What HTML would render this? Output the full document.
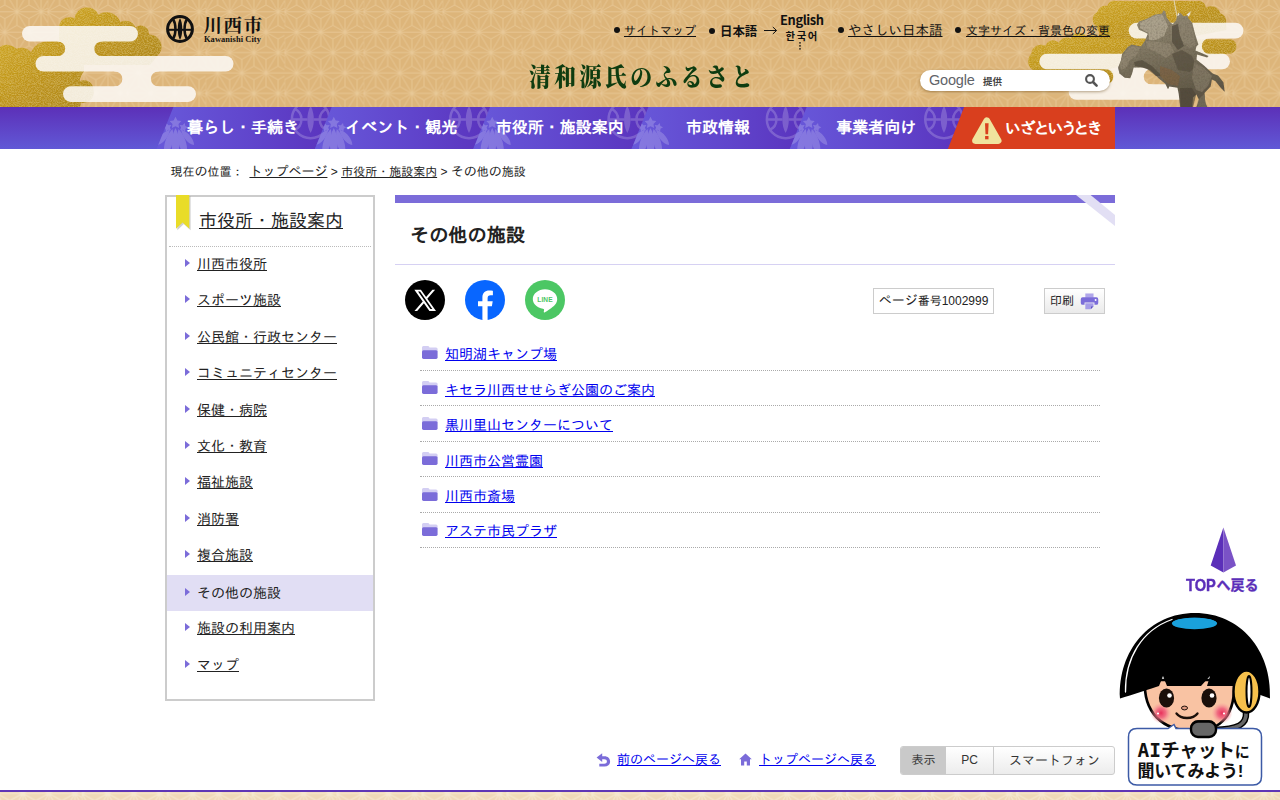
<!DOCTYPE html>
<html lang="ja">
<head>
<meta charset="utf-8">
<title>その他の施設｜川西市</title>
<style>
*{box-sizing:border-box;}
html,body{margin:0;padding:0;}
body{width:1280px;height:800px;overflow:hidden;background:#fff;position:relative;
  font-family:"Liberation Sans","IPAGothic","Noto Sans CJK JP",sans-serif;color:#222;font-size:14px;}
a{color:#222;text-decoration:underline;}
.abs{position:absolute;}
#header{position:absolute;left:0;top:0;width:1280px;height:107px;overflow:hidden;background:#ddb57a;}
#header svg.bg{position:absolute;left:0;top:0;}
#nav{position:absolute;left:0;top:107px;width:1280px;height:42px;background:linear-gradient(180deg,#5c30b8 0%,#6158d6 100%);overflow:hidden;}
.hl{position:absolute;top:23px;font-size:12px;line-height:16px;white-space:nowrap;color:#111;}
.hl a{color:#111;}
.dot{position:absolute;width:6px;height:6px;border-radius:50%;background:#111;}
.navtxt{position:absolute;top:0;height:42px;line-height:42px;color:#fff;font-weight:bold;font-size:16px;text-align:center;white-space:nowrap;
  font-family:"Liberation Sans","IPAGothic","Noto Sans CJK JP",sans-serif;}
.k{font-size:13px;}
#crumb{position:absolute;left:170.5px;top:162.500px;font-size:12px;line-height:18px;white-space:nowrap;color:#222;}
#side{position:absolute;left:165px;top:195px;width:210px;height:506px;border:2px solid #ccc;background:#fff;}
#side h2{margin:0;position:absolute;left:32px;top:13px;font-size:18px;font-weight:normal;line-height:22px;white-space:nowrap;}
#side .sep{position:absolute;left:2px;right:2px;top:49px;border-top:1px dotted #bbb;}
#side .it{position:absolute;left:0;width:206px;height:36px;line-height:36px;padding-left:30px;font-size:14px;white-space:nowrap;}
#side .it:before{content:"";position:absolute;left:18px;top:13px;border-left:5px solid #7b6cd9;border-top:4px solid transparent;border-bottom:4px solid transparent;}
#side .cur{background:#e1def4;}
#main{position:absolute;left:395px;top:195px;width:720px;}
#main .bar{position:absolute;left:0;top:0;width:720px;height:8px;background:#7b6cd9;}
#main h1{position:absolute;left:15px;top:29px;margin:0;font-size:19.2px;line-height:24px;font-weight:bold;white-space:nowrap;color:#222;}
#main .hline{position:absolute;left:0;top:69px;width:720px;border-top:1px solid #d6d1f3;}
.sns{position:absolute;top:85px;width:40px;height:40px;}
#pno{position:absolute;left:478px;top:93px;width:121px;height:26px;border:1px solid #ccc;font-size:12px;line-height:24px;text-align:center;white-space:nowrap;background:#fff;}
#prt{position:absolute;left:649px;top:93px;width:61px;height:26px;border:1px solid #ccc;background:linear-gradient(#fff,#eaeaea);font-size:12px;line-height:24px;padding-left:5px;white-space:nowrap;}
.li{position:absolute;left:25px;width:680px;height:35.48px;border-bottom:1px dotted #aaa;font-size:14px;line-height:20px;white-space:nowrap;}
.li a{position:absolute;left:25px;top:8.780px;color:#0000ee;}
.li svg{position:absolute;left:2px;top:10.300px;}
#foot a{color:#0000ee;}
</style>
</head>
<body>

<div id="header">
<svg class="bg" width="1280" height="107" viewBox="0 0 1280 107">
  <defs>
    <pattern id="asa" x="-31.5" y="0" width="79" height="40.8" patternUnits="userSpaceOnUse">
      <path d="M-24.2 11.75L0 11.75M-12.1 -8.65L0 11.75M-12.1 4.95L0 11.75M-12.1 18.55L0 11.75M-12.1 32.15L0 52.55M-12.1 32.15L12.1 32.15M0 -1.85L0 11.75M0 11.75L-12.1 32.15M0 11.75L12.1 32.15M0 11.75L24.2 11.75M0 25.35L-12.1 32.15M0 25.35L0 11.75M0 25.35L12.1 32.15M0 38.95L-12.1 32.15M0 38.95L0 52.55M0 38.95L12.1 32.15M12.1 -8.65L0 11.75M12.1 -8.65L24.2 11.75M12.1 4.95L0 11.75M12.1 4.95L12.1 -8.65M12.1 4.95L24.2 11.75M12.1 18.55L0 11.75M12.1 18.55L12.1 32.15M12.1 18.55L24.2 11.75M12.1 32.15L0 52.55M12.1 32.15L24.2 52.55M12.1 32.15L36.3 32.15M12.1 45.75L12.1 32.15M24.2 -1.85L24.2 11.75M24.2 11.75L12.1 32.15M24.2 11.75L36.3 32.15M24.2 11.75L48.4 11.75M24.2 25.35L12.1 32.15M24.2 25.35L24.2 11.75M24.2 25.35L36.3 32.15M24.2 38.95L12.1 32.15M24.2 38.95L24.2 52.55M24.2 38.95L36.3 32.15M36.3 -8.65L24.2 11.75M36.3 -8.65L48.4 11.75M36.3 4.95L24.2 11.75M36.3 4.95L36.3 -8.65M36.3 4.95L48.4 11.75M36.3 18.55L24.2 11.75M36.3 18.55L36.3 32.15M36.3 18.55L48.4 11.75M36.3 32.15L24.2 52.55M36.3 32.15L48.4 52.55M36.3 32.15L60.5 32.15M36.3 45.75L36.3 32.15M48.4 -1.85L48.4 11.75M48.4 11.75L36.3 32.15M48.4 11.75L60.5 32.15M48.4 11.75L72.6 11.75M48.4 25.35L36.3 32.15M48.4 25.35L48.4 11.75M48.4 25.35L60.5 32.15M48.4 38.95L36.3 32.15M48.4 38.95L48.4 52.55M48.4 38.95L60.5 32.15M60.5 -8.65L48.4 11.75M60.5 -8.65L72.6 11.75M60.5 4.95L48.4 11.75M60.5 4.95L60.5 -8.65M60.5 4.95L72.6 11.75M60.5 18.55L48.4 11.75M60.5 18.55L60.5 32.15M60.5 18.55L72.6 11.75M60.5 32.15L48.4 52.55M60.5 32.15L72.6 52.55M60.5 32.15L84.7 32.15M60.5 45.75L60.5 32.15M72.6 -1.85L72.6 11.75M72.6 11.75L60.5 32.15M72.6 11.75L84.7 32.15M72.6 11.75L96.8 11.75M72.6 25.35L60.5 32.15M72.6 25.35L72.6 11.75M72.6 25.35L84.7 32.15M72.6 38.95L60.5 32.15M72.6 38.95L72.6 52.55M72.6 38.95L84.7 32.15M84.7 -8.65L72.6 11.75M84.7 4.95L72.6 11.75M84.7 18.55L72.6 11.75M84.7 32.15L72.6 52.55" stroke="#e8c999" stroke-width="0.95" stroke-opacity="0.85" fill="none"/>
    </pattern>
    <linearGradient id="gold" x1="0" y1="0" x2="1" y2="1">
      <stop offset="0" stop-color="#cda526"/><stop offset="0.5" stop-color="#bd931a"/><stop offset="1" stop-color="#ad861a"/>
    </linearGradient>
    <linearGradient id="bronze" x1="0" y1="0" x2="0.3" y2="1"><stop offset="0" stop-color="#9a917b"/><stop offset="0.5" stop-color="#7d7460"/><stop offset="1" stop-color="#5f5746"/></linearGradient>
    <filter id="stat" x="-5%" y="-5%" width="110%" height="110%">
      <feGaussianBlur in="SourceGraphic" stdDeviation="0.45" result="b"/>
      <feTurbulence type="fractalNoise" baseFrequency="0.55" numOctaves="2" seed="11" result="n"/>
      <feColorMatrix in="n" type="matrix" values="0 0 0 0 0.1  0 0 0 0 0.08  0 0 0 0 0.05  0.8 0 0 0 -0.3" result="dk"/>
      <feComposite in="dk" in2="b" operator="in" result="dk2"/>
      <feMerge><feMergeNode in="b"/><feMergeNode in="dk2"/></feMerge>
    </filter>
    <filter id="foil" x="0" y="0" width="100%" height="100%">
      <feTurbulence type="fractalNoise" baseFrequency="0.7 1.1" numOctaves="2" seed="7" result="n"/>
      <feColorMatrix in="n" type="matrix" values="0 0 0 0 0.9  0 0 0 0 0.74  0 0 0 0 0.22  0.8 0 0 0 -0.3" result="spark"/>
      <feComposite in="spark" in2="SourceGraphic" operator="in" result="s2"/>
      <feMerge><feMergeNode in="SourceGraphic"/><feMergeNode in="s2"/></feMerge>
    </filter>
  </defs>
  <rect width="1280" height="107" fill="url(#asa)"/>

  <!-- left gold clouds -->
  <g id="cloudL" filter="url(#foil)">
    <path fill="url(#gold)" d="M59 26.500A10.400 10.400 0 0 1 74.500 18.500A12.700 12.700 0 0 1 98.500 14.500A14.900 14.900 0 0 1 120.400 22A10.900 10.900 0 0 1 135.500 27.500A8.100 8.100 0 0 1 148.800 34.400A12.300 12.300 0 0 1 157 56.200L150 65L70 65L59 56Z"/>
    <path fill="url(#gold)" d="M0 47A13 13 0 0 1 16.500 48.800A12.200 12.200 0 0 1 31 52A18 18 0 0 1 48 41.300L70 41L70 60L84 62L84 71.500Q80 76 79.800 81.200A9.500 9.500 0 0 1 93.500 90A10.500 10.500 0 0 1 81 102.500L80 107L0 107Z"/>
  </g>
  <g fill="#fcf9f5" opacity="0.88">
    <rect x="22" y="26" width="116" height="15.6" rx="7.8"/>
    <rect x="35.5" y="56" width="198" height="15.6" rx="7.8"/>
    <rect x="63" y="86.3" width="133" height="15.6" rx="7.8"/>
    <path d="M56 40.500L57.800 41.400A7.300 7.300 0 0 1 57.800 56.200L56 57L103.500 57L101.700 56.200A7.300 7.300 0 0 1 101.700 41.400L103.500 40.500Z"/>
    <path d="M113 70.500L114.800 71.400A7.400 7.400 0 0 1 114.800 86.500L113 87.300L160.200 87.300L158.400 86.500A7.400 7.400 0 0 1 158.400 71.400L160.200 70.500Z"/>
  </g>
  <!-- right gold clouds -->
  <g id="cloudR" filter="url(#foil)">
    <path fill="url(#gold)" d="M1099 40Q1100 33 1097 26.400A8 8 0 0 1 1097.200 12.200A8.500 8.500 0 0 1 1107.300 6A7 7 0 0 1 1115.500 1L1198.800 1A7 7 0 0 1 1205.900 8.100A9 9 0 0 1 1220.100 13.200A8 8 0 0 1 1226.200 21.300L1226.200 30L1150 45Z"/>
    <path fill="url(#gold)" d="M1100 38.600A9 9 0 0 0 1087 37.600A9 9 0 0 0 1070.800 38.600A9 9 0 0 0 1058.600 42.700A8 8 0 0 0 1045.400 45.700A10 10 0 0 0 1031.200 53.800A11 11 0 0 0 1034.200 71.100Q1036 80 1045 83.500L1107.300 83.500A7.500 7.500 0 0 0 1109.400 69L1150 60L1231 53.500A7.300 7.300 0 0 0 1231.300 39.500L1150 39Z"/>
  </g>
  <g fill="#fcf9f5" opacity="0.88">
    <rect x="1128.7" y="22.7" width="114.7" height="15.8" rx="7.9"/>
    <rect x="1039.3" y="53.8" width="190.7" height="15.4" rx="7.7"/>
    <rect x="1068.7" y="84.3" width="125" height="15.4" rx="7.7"/>
    <path d="M1103.500 68.200L1105.500 69A7.600 7.600 0 0 1 1105.500 84.500L1103.500 85.300L1153.500 85.300L1151.500 84.500A7.600 7.600 0 0 1 1151.500 69L1153.500 68.200Z"/>
    <path d="M1148 37.500L1150 38.300A7.700 7.700 0 0 1 1150 54L1148 54.800L1211.700 54.800L1209.700 54A7.700 7.700 0 0 1 1209.700 38.300L1211.700 37.500Z"/>
  </g>

  <!-- statue -->
  <g id="statue" filter="url(#stat)">
    <path d="M1178.500 24C1176.500 14 1175 6 1174 0" fill="none" stroke="#f2ede2" stroke-width="0.800"/>
    <path d="M1178 22L1194 36M1150 30L1176 42" fill="none" stroke="#4a4336" stroke-width="0.700"/>
    <path d="M1137 25L1139 21.6L1146.4 18.9L1154.5 14.8L1162 13.5L1163.3 10.6L1165.3 11.3L1166.7 17.5L1170 22.3L1172.8 24.3L1176.1 20.2L1177.5 14.8L1180.2 12.8L1183.6 16.2L1187.5 15.5L1188.3 18.2L1192.3 23L1195 33.7L1198.4 44.5L1196.4 46.6L1195.5 50.5L1208.5 56L1207.2 57.6L1197 54.6L1196.4 59.4L1204.5 66.1L1212.6 73.6L1218 75.6L1223.4 82.3L1224.7 91.8L1220.7 87.7L1215.3 81L1211.9 79.6L1210.6 86.4L1204.5 93.1L1205.2 102.6L1207.2 107L1196.4 107L1199.1 99.9L1196.4 94.5L1193 97.2L1192.3 107L1180.2 107L1178.8 94.5L1177.5 87.7L1169.4 86.4L1168 89.3L1165.3 83.7L1158.6 78.3L1150.5 70.2L1142.4 67.5L1133.6 67.5L1132.3 72.9L1130.2 78.3L1124.8 77.8L1119.4 73.6L1118.1 67.5L1120.8 60.7L1122.1 54L1127.5 47.2L1131.6 44.5L1141 46.6L1145.1 40.5L1147.8 33.7L1143.7 31.7L1139 29.7Z" fill="url(#bronze)"/>
    <path d="M1140 22.500L1147 19.500L1155 15.500L1162 14.500L1165 20L1168 26L1164 36L1156 40L1149 40L1148.500 33L1144 30.500L1140 28Z" fill="#b3a994" opacity="0.8"/>
    <path d="M1146 41L1158 42L1170 44L1174 52L1166 58L1156 52L1147 48Z" fill="#958a75" opacity="0.7"/>
    <path d="M1123 55L1128.500 48L1133 46L1140 48L1136 56L1130 60L1126 68L1121 70L1120 64Z" fill="#958a75" opacity="0.7"/>
    <path d="M1134 62L1142 60L1152 66L1162 76L1156 76L1146 68L1135 66Z" fill="#4a4335" opacity="0.6"/>
    <path d="M1178 21L1186 18L1191 25L1194 36L1196 45L1190 48L1184 44L1179 34Z" fill="#8e8470" opacity="0.7"/>
    <path d="M1172 26L1178 24L1180 36L1184 46L1178 50L1172 42Z" fill="#4a4335" opacity="0.65"/>
    <path d="M1172 54L1182 50L1192 56L1196 66L1190 72L1178 70Z" fill="#564e3f" opacity="0.7"/>
    <path d="M1160 66L1172 70L1180 76L1178 86L1168 84L1160 76Z" fill="#7f6240" opacity="0.7"/>
    <path d="M1194 62L1204 68L1212 76L1208 86L1202 92L1196 90L1192 78Z" fill="#8a806c" opacity="0.65"/>
    <path d="M1180 88L1192 88L1196 95L1193 107L1181 107Z" fill="#4a4335" opacity="0.6"/>
    <path d="M1198 100L1204 94L1206 104L1207 107L1197 107Z" fill="#7d7461" opacity="0.6"/>
    <path d="M1186.500 14.500L1191 11.200L1189 16.500Z" fill="#f6f2ea"/>
    <path d="M1177.300 16L1178.300 12.500L1179.500 15Z" fill="#f6f2ea"/>
  </g>
</svg>

<!-- logo -->
<svg class="abs" style="left:165px;top:14px" width="30" height="30" viewBox="0 0 30 30">
  <circle cx="15" cy="15" r="12.4" fill="none" stroke="#111" stroke-width="3"/>
  <path d="M2.5 15.800H27.5" stroke="#111" stroke-width="2"/>
  <path d="M15 4C12 9 12 21 15 26C18 21 18 9 15 4Z" fill="#111"/>
  <path d="M8.2 5.5C11.2 10 11.2 20 8.2 24.5M21.8 5.5C18.8 10 18.8 20 21.8 24.5" fill="none" stroke="#111" stroke-width="2.500"/>
</svg>
<div class="abs" style="left:203.500px;top:12.500px;font-family:'Liberation Serif','Noto Serif CJK JP','Noto Serif CJK SC',serif;font-size:18.5px;line-height:26px;letter-spacing:1.6px;color:#111;white-space:nowrap;font-weight:700">川西市</div>
<div class="abs" style="left:204px;top:34px;font-family:'Liberation Serif',serif;font-weight:bold;font-size:8.4px;line-height:12px;letter-spacing:0.1px;color:#111;white-space:nowrap">Kawanishi City</div>

<!-- header links -->
<i class="dot" style="left:614px;top:27px"></i>
<div class="hl" style="left:624px"><a href="#">サイトマップ</a></div>
<i class="dot" style="left:709px;top:28px"></i>
<div class="hl" style="left:720px;font-weight:bold;font-family:'Liberation Sans','Noto Sans CJK JP',sans-serif;top:23px;font-size:12.4px;line-height:18px">日本語</div>
<svg class="abs" style="left:763px;top:26px" width="15" height="10" viewBox="0 0 15 10"><path d="M1 4.500H13.500M9.800 1L13.600 4.500L9.800 8" fill="none" stroke="#111" stroke-width="1"/></svg>
<div id="eng" class="hl" style="left:780px;top:11px;font-weight:bold;font-size:12.9px;letter-spacing:-0.4px;line-height:18px;font-family:'Noto Sans CJK JP','Liberation Sans',sans-serif">English</div>
<div id="kor" class="hl" style="left:785.5px;top:28px;font-weight:bold;font-size:10.3px;line-height:16px;letter-spacing:1.7px;font-family:'Noto Sans CJK KR','NanumGothic',sans-serif">한국어</div>
<svg class="abs" style="left:798px;top:41px" width="4" height="10" viewBox="0 0 4 10"><circle cx="2" cy="1.800" r="0.850" fill="#111"/><circle cx="2" cy="4.800" r="0.850" fill="#111"/><circle cx="2" cy="7.800" r="0.850" fill="#111"/></svg>
<i class="dot" style="left:838px;top:27px"></i>
<div class="hl" style="left:848px;font-size:13.5px;top:22px;line-height:18px"><a href="#">やさしい日本語</a></div>
<i class="dot" style="left:955px;top:27px"></i>
<div class="hl" style="left:966px"><a href="#">文字サイズ・背景色の変更</a></div>

<!-- catch copy -->
<div class="abs" style="left:529px;top:59.500px;font-family:'Liberation Serif','Noto Serif CJK JP','Noto Serif CJK SC',serif;font-weight:900;font-size:25.5px;line-height:36px;letter-spacing:3.900px;color:#0e3c10;white-space:nowrap;transform:scaleX(0.86);transform-origin:0 0">清和源氏のふるさと</div>

<!-- search -->
<div class="abs" style="left:920px;top:70px;width:190px;height:21px;border-radius:10.5px;background:#fff;box-shadow:0 1px 3px rgba(90,60,10,.45)">
  <span class="abs" style="left:9px;top:0;font-size:14.5px;line-height:20px;color:#5f6368;font-family:'Liberation Sans',sans-serif;letter-spacing:-0.2px">Google</span>
  <span class="abs" style="left:63px;top:1px;font-size:9.5px;line-height:20px;color:#444;font-weight:bold;font-family:'Noto Sans CJK JP',sans-serif">提供</span>
  <svg class="abs" style="left:164px;top:3px" width="15" height="15" viewBox="0 0 15 15"><circle cx="6" cy="6" r="3.9" fill="none" stroke="#555" stroke-width="2.1"/><path d="M9 9L12.6 12.6" stroke="#555" stroke-width="2.6" stroke-linecap="round"/></svg>
</div>
</div>

<div id="nav">
<svg class="abs" style="left:0;top:0" width="1280" height="42" viewBox="0 0 1280 42">
<defs>
<linearGradient id="ng" x1="0" y1="0" x2="1" y2="0"><stop offset="0" stop-color="#6859da"/><stop offset="0.55" stop-color="#6045cc"/><stop offset="1" stop-color="#5a33bd"/></linearGradient>
<g id="emb" fill="none" stroke="#fff" stroke-width="2.5" opacity="0.2">
<circle cx="0" cy="0" r="18.75"/>
<path d="M-18.75 0H-3.100M3.100 0H18.75"/>
<path d="M-16 -10.5A11.500 11.500 0 0 1 -16 10.5M16 -10.5A11.500 11.500 0 0 0 16 10.5"/>
<path d="M0 -13.500C-4.300 -6 -4.300 6 0 13.500C4.300 6 4.300 -6 0 -13.500Z" fill="#fff" stroke="none"/>
</g>
<g id="rin" fill="#fff" opacity="0.2">
<path d="M19.5 11.0C13.8 21.5 14.9 35.0 19.5 41.0C24.1 35.0 25.2 21.5 19.5 11.0Z"/>
<path d="M16.5 12.0C8.7 20.0 6.3 32.4 9.0 39.0C14.7 34.8 19.1 22.9 16.5 12.0Z"/>
<path d="M22.5 12.0C19.9 22.9 24.3 34.8 30.0 39.0C32.7 32.4 30.3 20.0 22.5 12.0Z"/>
<path d="M14.0 12.5C6.1 15.1 0.9 22.6 1.0 28.0C6.3 27.2 12.8 20.7 14.0 12.5Z"/>
<path d="M25.0 12.5C26.2 20.7 32.7 27.2 38.0 28.0C38.1 22.6 32.9 15.1 25.0 12.5Z"/>
<path d="M19.5 -0.2L21.4 3.4L25.4 4.1L22.5 7.0L23.1 11.0L19.5 9.2L15.9 11.0L16.5 7.0L13.6 4.1L17.6 3.4Z"/>
<path d="M10.3 6.1L12.4 8.3L15.4 8.0L13.9 10.6L15.1 13.4L12.1 12.8L9.9 14.8L9.5 11.8L6.9 10.3L9.6 9.0Z"/>
<path d="M28.7 6.1L29.4 9.0L32.1 10.3L29.5 11.8L29.1 14.8L26.9 12.8L23.9 13.4L25.1 10.6L23.6 8.0L26.6 8.3Z"/>
</g>
</defs>
<path d="M173.4 0H331.7L314.9 42H156.6Z" fill="url(#ng)"/>
<path d="M331.7 0H490.1L473.3 42H314.9Z" fill="url(#ng)"/>
<path d="M490.1 0H648.4L631.6 42H473.3Z" fill="url(#ng)"/>
<path d="M648.4 0H806.7L789.9 42H631.6Z" fill="url(#ng)"/>
<path d="M806.7 0H965.1L948.3 42H789.9Z" fill="url(#ng)"/>
<clipPath id="c0"><path d="M173.4 0H331.7L314.9 42H156.6Z"/></clipPath>
<g clip-path="url(#c0)"><use href="#emb" x="310.6" y="12.4"/><use href="#rin" x="156.0" y="10"/></g>
<clipPath id="c1"><path d="M331.7 0H490.1L473.3 42H314.9Z"/></clipPath>
<g clip-path="url(#c1)"><use href="#emb" x="469.0" y="12.4"/><use href="#rin" x="314.3" y="10"/></g>
<clipPath id="c2"><path d="M490.1 0H648.4L631.6 42H473.3Z"/></clipPath>
<g clip-path="url(#c2)"><use href="#emb" x="627.3" y="12.4"/><use href="#rin" x="472.7" y="10"/></g>
<clipPath id="c3"><path d="M648.4 0H806.7L789.9 42H631.6Z"/></clipPath>
<g clip-path="url(#c3)"><use href="#emb" x="785.6" y="12.4"/><use href="#rin" x="631.0" y="10"/></g>
<clipPath id="c4"><path d="M806.7 0H965.1L948.3 42H789.9Z"/></clipPath>
<g clip-path="url(#c4)"><use href="#emb" x="944.0" y="12.4"/><use href="#rin" x="789.3" y="10"/></g>
<path d="M964.1 0H1115V42H947.9Z" fill="#d93f1e"/>
<path d="M986.800 13.700L998.200 33.600H975.400Z" fill="#f0e39d" stroke="#f0e39d" stroke-width="6.600" stroke-linejoin="round"/>
<path d="M985 16.200H988.600L988.100 27.300H985.500Z" fill="#d93f1e"/><rect x="985.100" y="29" width="3.400" height="3.300" fill="#d93f1e"/>
</svg>
<div class="navtxt" style="left:163.8px;width:158.3px">暮らし・手続き</div>
<div class="navtxt" style="left:322.1px;width:158.3px">イベント・観光</div>
<div class="navtxt" style="left:480.5px;width:158.3px">市役所・施設案内</div>
<div class="navtxt" style="left:638.8px;width:158.3px">市政情報</div>
<div class="navtxt" style="left:797.1px;width:158.3px">事業者向け</div>
<div class="navtxt" style="left:1005.500px;font-size:16px;text-align:left;top:1px;font-family:'Liberation Sans','IPAPGothic','IPAGothic',sans-serif">いざというとき</div>
</div>

<div id="crumb">現在<span class="k">の</span>位置：<span style="display:inline-block;width:2.6px"></span> <a href="#"><span class="k">トップページ</span></a> &gt; <a href="#">市役所・施設案内</a> &gt; <span class="k">その</span>他<span class="k">の</span>施設</div>

<svg class="abs" style="left:174px;top:195px;z-index:3" width="20" height="38" viewBox="0 0 20 38"><path d="M2.600 0.500H15.900V34.600L9.200 28.200L2.600 34.600Z" fill="#777" opacity="0.35" transform="translate(0.700 0.700)"/><path d="M2 0H15.300V33.800L8.600 27.500L2 33.800Z" fill="#e9dc28"/></svg>
<div id="side">
  <h2><a href="#">市役所・施設案内</a></h2>
  <div class="sep"></div>
  <div class="it" style="top:49px"><a href="#">川西市役所</a></div>
  <div class="it" style="top:85px"><a href="#">スポーツ施設</a></div>
  <div class="it" style="top:122px"><a href="#">公民館・行政センター</a></div>
  <div class="it" style="top:158px"><a href="#">コミュニティセンター</a></div>
  <div class="it" style="top:195px"><a href="#">保健・病院</a></div>
  <div class="it" style="top:231px"><a href="#">文化・教育</a></div>
  <div class="it" style="top:267px"><a href="#">福祉施設</a></div>
  <div class="it" style="top:304px"><a href="#">消防署</a></div>
  <div class="it" style="top:340px"><a href="#">複合施設</a></div>
  <div class="it cur" style="top:378px">その他の施設</div>
  <div class="it" style="top:413px"><a href="#">施設の利用案内</a></div>
  <div class="it" style="top:450px"><a href="#">マップ</a></div>
</div>

<div id="main">
  <div class="bar"></div>
  <svg class="abs" style="left:670px;top:0" width="50" height="34" viewBox="0 0 50 34"><path d="M11 0H25.600L50 20V31.100Z" fill="#e2dff4"/></svg>
  <h1>その他の施設</h1>
  <div class="hline"></div>

  <svg class="sns" style="left:10px" viewBox="0 0 40 40"><circle cx="20" cy="20" r="20" fill="#000"/>
    <path transform="translate(20 20.300) scale(1.1) translate(-20 -20.150)" d="M10.300 10.500H16.300L21 17.100L26.700 10.500H29.200L22.100 18.700L30 29.800H24L19 22.800L12.900 29.800H10.400L17.900 21.200Z M13.700 12.200L24.900 28.100H26.700L15.500 12.200Z" fill="#fff" fill-rule="evenodd"/></svg>
  <svg class="sns" style="left:70px" viewBox="0 0 40 40"><circle cx="20" cy="20" r="20" fill="#0866ff"/>
    <path d="M22.600 40V26.300H26.900L27.700 21.200H22.600V18.400C22.600 16.400 23.400 15.300 25.700 15.300H27.900V10.800C27.100 10.700 25.700 10.500 24.200 10.500C20.100 10.500 17.400 12.800 17.400 17.500V21.200H13V26.300H17.400V39.800C18.200 39.950 19.100 40 20 40C20.900 40 21.800 39.950 22.600 40Z" fill="#fff"/></svg>
  <svg class="sns" style="left:130px" viewBox="0 0 40 40"><circle cx="20" cy="20" r="20" fill="#4cc764"/>
    <path d="M20 9.300C13.300 9.300 7.800 13.700 7.800 19.100C7.800 23.900 12.100 28 17.900 28.700C18.300 28.800 18.800 29 19 29.300C19.100 29.600 19.100 30.100 19 30.400L18.800 31.500C18.800 31.800 18.500 32.800 20 32.200C21.500 31.600 27.400 27.800 30 24.800C31.500 23.100 32.200 21.200 32.200 19.100C32.200 13.700 26.700 9.300 20 9.300Z" fill="#fff"/>
    <text x="20" y="21.700" font-family="'Liberation Sans',sans-serif" font-weight="bold" font-size="6.600" text-anchor="middle" fill="#4cc764" letter-spacing="0.1">LINE</text></svg>
  <div id="pno"><span class="k">ページ</span>番号1002999</div>
  <div id="prt">印刷<svg class="abs" style="left:35px;top:3.500px" width="19.500" height="17" viewBox="0 0 20 18"><path d="M5.300 0.500H14V5H5.300Z" fill="#b0a6ea"/><path d="M2.500 4.500H17Q19 4.500 19 6.500V10.500Q19 12.500 17 12.500H15V10H4.500V12.500H2.500Q0.500 12.500 0.500 10.500V6.500Q0.500 4.500 2.500 4.500Z" fill="#7b6cd9"/><circle cx="16.200" cy="7.400" r="1" fill="#fff"/><path d="M5.300 10.800H14V14L11 17.300H5.300Z" fill="#a69ce8"/><path d="M11.300 17L13.800 14.200H11.300Z" fill="#5c4fc0"/></svg></div>
  <div class="li" style="top:140.30px"><svg width="15.600" height="13" viewBox="0 0 17 13" preserveAspectRatio="none"><path d="M1.500 0H6.600Q7.400 0 7.800 0.700L8.200 1.400H15.300Q17 1.400 17 3V6H0V1.500Q0 0 1.500 0Z" fill="#d3cef3"/><path d="M0 5.700Q0 4.200 1.600 4.200H15.400Q17 4.200 17 5.700V11.300Q17 13 15.300 13H1.700Q0 13 0 11.300Z" fill="#7b6cd9"/></svg><a href="#">知明湖キャンプ場</a></div>
  <div class="li" style="top:175.78px"><svg width="15.600" height="13" viewBox="0 0 17 13" preserveAspectRatio="none"><path d="M1.500 0H6.600Q7.400 0 7.800 0.700L8.200 1.400H15.300Q17 1.400 17 3V6H0V1.500Q0 0 1.500 0Z" fill="#d3cef3"/><path d="M0 5.700Q0 4.200 1.600 4.200H15.400Q17 4.200 17 5.700V11.300Q17 13 15.300 13H1.700Q0 13 0 11.300Z" fill="#7b6cd9"/></svg><a href="#">キセラ川西せせらぎ公園のご案内</a></div>
  <div class="li" style="top:211.26px"><svg width="15.600" height="13" viewBox="0 0 17 13" preserveAspectRatio="none"><path d="M1.500 0H6.600Q7.400 0 7.800 0.700L8.200 1.400H15.300Q17 1.400 17 3V6H0V1.500Q0 0 1.500 0Z" fill="#d3cef3"/><path d="M0 5.700Q0 4.200 1.600 4.200H15.400Q17 4.200 17 5.700V11.300Q17 13 15.300 13H1.700Q0 13 0 11.300Z" fill="#7b6cd9"/></svg><a href="#">黒川里山センターについて</a></div>
  <div class="li" style="top:246.74px"><svg width="15.600" height="13" viewBox="0 0 17 13" preserveAspectRatio="none"><path d="M1.500 0H6.600Q7.400 0 7.800 0.700L8.200 1.400H15.300Q17 1.400 17 3V6H0V1.500Q0 0 1.500 0Z" fill="#d3cef3"/><path d="M0 5.700Q0 4.200 1.600 4.200H15.400Q17 4.200 17 5.700V11.300Q17 13 15.300 13H1.700Q0 13 0 11.300Z" fill="#7b6cd9"/></svg><a href="#">川西市公営霊園</a></div>
  <div class="li" style="top:282.22px"><svg width="15.600" height="13" viewBox="0 0 17 13" preserveAspectRatio="none"><path d="M1.500 0H6.600Q7.400 0 7.800 0.700L8.200 1.400H15.300Q17 1.400 17 3V6H0V1.500Q0 0 1.500 0Z" fill="#d3cef3"/><path d="M0 5.700Q0 4.200 1.600 4.200H15.400Q17 4.200 17 5.700V11.300Q17 13 15.300 13H1.700Q0 13 0 11.300Z" fill="#7b6cd9"/></svg><a href="#">川西市斎場</a></div>
  <div class="li" style="top:317.70px"><svg width="15.600" height="13" viewBox="0 0 17 13" preserveAspectRatio="none"><path d="M1.500 0H6.600Q7.400 0 7.800 0.700L8.200 1.400H15.300Q17 1.400 17 3V6H0V1.500Q0 0 1.500 0Z" fill="#d3cef3"/><path d="M0 5.700Q0 4.200 1.600 4.200H15.400Q17 4.200 17 5.700V11.300Q17 13 15.300 13H1.700Q0 13 0 11.300Z" fill="#7b6cd9"/></svg><a href="#">アステ市民プラザ</a></div>
</div>

<div id="foot">
  <svg class="abs" style="left:596px;top:753px" width="15" height="14" viewBox="0 0 15 14"><path d="M6.200 0.200L0.600 4.600L6.200 9V6.200H8.300C9.900 6.200 10.900 7.100 10.900 8.500C10.900 9.900 9.900 10.700 8.300 10.700H3.300V13.600H8.500C11.900 13.600 14.100 11.600 14.100 8.500C14.100 5.400 11.900 3.200 8.500 3.200H6.200Z" fill="#7b6cd9"/></svg>
  <a class="abs" href="#" style="left:617px;top:751px;font-size:13px;line-height:18px;white-space:nowrap">前のページへ戻る</a>
  <svg class="abs" style="left:739px;top:753px" width="13" height="13" viewBox="0 0 13 13"><path d="M6.500 0.400L0.200 6.300H2V12.600H5.200V8.500H7.800V12.600H11V6.300H12.800Z" fill="#7b6cd9"/></svg>
  <a class="abs" href="#" style="left:759px;top:751px;font-size:13px;line-height:18px;white-space:nowrap">トップページへ戻る</a>
  <div class="abs" style="left:900px;top:746px;width:215px;height:29px;border:1px solid #ccc;border-radius:3px;background:linear-gradient(#fff,#ececec);overflow:hidden;font-size:12px;line-height:27px;white-space:nowrap;color:#333">
    <span class="abs" style="left:0;top:0;width:45px;height:27px;background:#c9c9c9;text-align:center">表示</span>
    <span class="abs" style="left:45px;top:0;width:48px;height:27px;border-right:1px solid #ccc;text-align:center">PC</span>
    <span class="abs" style="left:93px;top:0;width:121px;height:27px;text-align:center;font-size:13px">スマートフォン</span>
  </div>
</div>

<!-- bottom strip -->
<div class="abs" style="left:0;top:790px;width:1280px;height:10px;background:#f0d9b8;border-top:2px solid #5f36b6;overflow:hidden"><svg class="abs" style="left:0;top:0" width="1280" height="10" viewBox="0 0 1280 10"><defs><pattern id="asa2" x="-3" y="-10.500" width="79" height="40.800" patternUnits="userSpaceOnUse" patternTransform="scale(1.075)"><path d="M-24.2 11.75L0 11.75M-12.1 -8.65L0 11.75M-12.1 4.95L0 11.75M-12.1 18.55L0 11.75M-12.1 32.15L0 52.55M-12.1 32.15L12.1 32.15M0 -1.85L0 11.75M0 11.75L-12.1 32.15M0 11.75L12.1 32.15M0 11.75L24.2 11.75M0 25.35L-12.1 32.15M0 25.35L0 11.75M0 25.35L12.1 32.15M0 38.95L-12.1 32.15M0 38.95L0 52.55M0 38.95L12.1 32.15M12.1 -8.65L0 11.75M12.1 -8.65L24.2 11.75M12.1 4.95L0 11.75M12.1 4.95L12.1 -8.65M12.1 4.95L24.2 11.75M12.1 18.55L0 11.75M12.1 18.55L12.1 32.15M12.1 18.55L24.2 11.75M12.1 32.15L0 52.55M12.1 32.15L24.2 52.55M12.1 32.15L36.3 32.15M12.1 45.75L12.1 32.15M24.2 -1.85L24.2 11.75M24.2 11.75L12.1 32.15M24.2 11.75L36.3 32.15M24.2 11.75L48.4 11.75M24.2 25.35L12.1 32.15M24.2 25.35L24.2 11.75M24.2 25.35L36.3 32.15M24.2 38.95L12.1 32.15M24.2 38.95L24.2 52.55M24.2 38.95L36.3 32.15M36.3 -8.65L24.2 11.75M36.3 -8.65L48.4 11.75M36.3 4.95L24.2 11.75M36.3 4.95L36.3 -8.65M36.3 4.95L48.4 11.75M36.3 18.55L24.2 11.75M36.3 18.55L36.3 32.15M36.3 18.55L48.4 11.75M36.3 32.15L24.2 52.55M36.3 32.15L48.4 52.55M36.3 32.15L60.5 32.15M36.3 45.75L36.3 32.15M48.4 -1.85L48.4 11.75M48.4 11.75L36.3 32.15M48.4 11.75L60.5 32.15M48.4 11.75L72.6 11.75M48.4 25.35L36.3 32.15M48.4 25.35L48.4 11.75M48.4 25.35L60.5 32.15M48.4 38.95L36.3 32.15M48.4 38.95L48.4 52.55M48.4 38.95L60.5 32.15M60.5 -8.65L48.4 11.75M60.5 -8.65L72.6 11.75M60.5 4.95L48.4 11.75M60.5 4.95L60.5 -8.65M60.5 4.95L72.6 11.75M60.5 18.55L48.4 11.75M60.5 18.55L60.5 32.15M60.5 18.55L72.6 11.75M60.5 32.15L48.4 52.55M60.5 32.15L72.6 52.55M60.5 32.15L84.7 32.15M60.5 45.75L60.5 32.15M72.6 -1.85L72.6 11.75M72.6 11.75L60.5 32.15M72.6 11.75L84.7 32.15M72.6 11.75L96.8 11.75M72.6 25.35L60.5 32.15M72.6 25.35L72.6 11.75M72.6 25.35L84.7 32.15M72.6 38.95L60.5 32.15M72.6 38.95L72.6 52.55M72.6 38.95L84.7 32.15M84.7 -8.65L72.6 11.75M84.7 4.95L72.6 11.75M84.7 18.55L72.6 11.75M84.7 32.15L72.6 52.55" stroke="#f6e7cf" stroke-width="1" fill="none"/></pattern></defs><rect width="1280" height="10" fill="url(#asa2)"/></svg></div>

<!-- TOP button -->
<svg class="abs" style="left:1208px;top:526px" width="30" height="48" viewBox="0 0 30 48"><path d="M15.400 1.500L2.700 39.600L15.400 46.400Z" fill="#5b2fb9"/><path d="M15.400 1.500L28 39.600L15.400 46.400Z" fill="#7a52c6"/></svg>
<div class="abs" style="left:1186px;top:574px;width:76px;text-align:left;font-family:'Liberation Sans','Noto Sans CJK JP',sans-serif;font-weight:bold;font-size:14px;line-height:22px;color:#5b2fb9;white-space:nowrap;-webkit-text-stroke:0.3px #5b2fb9"><span style="display:inline-block;position:relative;top:1px;font-size:17px;transform:scaleX(0.86);transform-origin:0 50%;width:30.600px;vertical-align:baseline;-webkit-text-stroke:0.45px #5b2fb9">TOP</span>へ戻る</div>

<!-- AI chat -->
<svg class="abs" style="left:1110px;top:600px" width="170" height="190" viewBox="0 0 170 190">
  <defs><radialGradient id="blush"><stop offset="0" stop-color="#e8305a"/><stop offset="0.45" stop-color="#ef5f7c" stop-opacity="0.85"/><stop offset="1" stop-color="#f8a0a0" stop-opacity="0"/></radialGradient></defs>
  <!-- face -->
  <path d="M35 80C33 112 52 131 84 131C112 131 126 114 124 80Z" fill="#f9c3a3" stroke="#000" stroke-width="2.600"/>
  <!-- hair -->
  <path d="M10 98.500C8 50 40 13 85 13C130 13 162 50 160 98.500C150 95 136 89 124 86L97 86L100 76L91 86L57 86L53 76L49 86C40 89 22 95 10 98.500Z" fill="#000"/>
  <path d="M15.500 92C15 58 32 30 62 19.500" fill="none" stroke="#fff" stroke-width="1.300" stroke-linecap="round"/>
  <ellipse cx="84.500" cy="23.500" rx="22.500" ry="5.800" fill="#1aa1dc"/>
  <path d="M62 23.500C62 20 72 17.700 84.500 17.700C97 17.700 107 20 107 23.500Z" fill="#1aa1dc"/>
  <!-- blush -->
  <circle cx="51" cy="113" r="10.500" fill="url(#blush)"/><circle cx="112" cy="113" r="10.500" fill="url(#blush)"/>
  <circle cx="48" cy="113.500" r="1.100" fill="#fff"/><circle cx="114" cy="113.500" r="1.100" fill="#fff"/>
  <!-- eyes -->
  <ellipse cx="56.500" cy="98" rx="7.600" ry="9.600" fill="#1a0f0a"/><ellipse cx="99" cy="98" rx="7.600" ry="9.600" fill="#1a0f0a"/>
  <circle cx="59.500" cy="95.500" r="2.300" fill="#fff"/><circle cx="102" cy="95.500" r="2.300" fill="#fff"/>
  <!-- nose mouth -->
  <ellipse cx="74.500" cy="108" rx="3" ry="1.900" fill="#e09a80" stroke="#1a0f0a" stroke-width="1"/>
  <path d="M66.500 113.500C71 119.500 83 119.500 87.500 113.500" fill="none" stroke="#1a0f0a" stroke-width="2.300" stroke-linecap="round"/>
  <!-- headset -->
  <path d="M136 112C137 125 128 129 104 130" fill="none" stroke="#000" stroke-width="6.500" stroke-linecap="round"/>
  <path d="M136 112C137 125 128 129 104 130" fill="none" stroke="#666" stroke-width="3.600" stroke-linecap="round"/>
  <ellipse cx="136.500" cy="91.500" rx="13" ry="21" fill="#f6c04c" stroke="#000" stroke-width="2.400"/>
  <ellipse cx="139" cy="91.500" rx="2.500" ry="15.500" fill="#fff" stroke="#000" stroke-width="2"/>
  <rect x="81" y="121.500" width="25" height="15.500" rx="7" fill="#666" stroke="#000" stroke-width="2.400"/>
  <!-- bubble -->
  <path d="M27 128.500H58L64 124.500L66 128.500H143Q151.500 128.500 151.500 137V176.500Q151.500 185 143 185H27Q18.500 185 18.500 176.500V137Q18.500 128.500 27 128.500Z" fill="#fff" stroke="#3c5aa6" stroke-width="1.500"/>
  <rect x="81" y="121.500" width="25" height="15.500" rx="7" fill="#666" stroke="#000" stroke-width="2.400"/>
  <text x="27.500" y="157" font-family="'Liberation Sans','Noto Sans CJK JP',sans-serif" font-weight="bold" font-size="18.800" fill="#111" letter-spacing="-0.3"><tspan font-family="'DejaVu Sans Mono',monospace" font-size="19.500" letter-spacing="0">AI</tspan>チャット<tspan font-size="15">に</tspan></text>
  <text x="27.500" y="177" font-family="'Liberation Sans','Noto Sans CJK JP',sans-serif" font-weight="bold" font-size="17" fill="#111" letter-spacing="-0.2">聞いてみよう!</text>
</svg>

</body>
</html>
